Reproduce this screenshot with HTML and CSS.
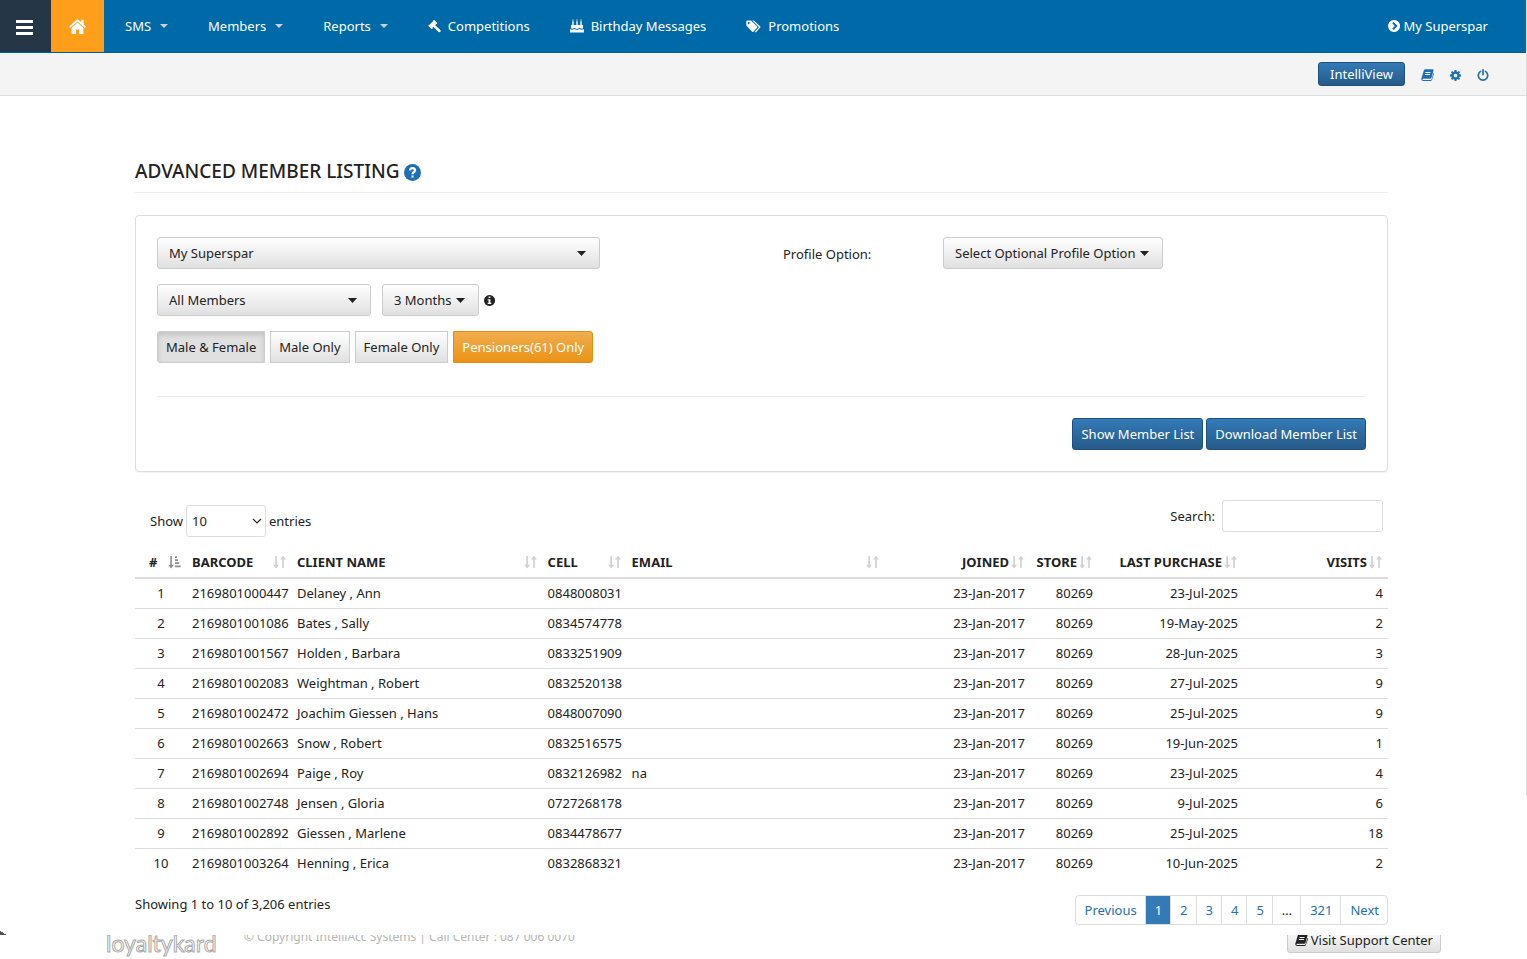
FILE: index.html
```html
<!DOCTYPE html>
<html lang="en">
  <head>
    <meta charset="utf-8">
    <title>Advanced Member Listing</title>
    <link rel="stylesheet" href="styles.css">
  </head>
  <body>
    <svg class="symbols" aria-hidden="true">
      <symbol id="home" viewBox="0 0 17 15">
        <path d="M8.500 0 0 7.600l1.200 1.300 7.300-6.500 7.300 6.500L17 7.600l-2.400-2.200V.8h-2.400v2.500z"/>
        <path d="M8.500 3.600 2.600 8.900V15h4.200v-4.600h3.400V15h4.200V8.900z"/>
      </symbol>
      <symbol id="gavel" viewBox="0 0 13 13">
        <path d="M5.200.2 6.300 0 9.300 3l-.2 1.200-.9-.1-3.700 3.700.1.900-1.200.2-3-3L.6 4.700l.9.100 3.700-3.700z"/>
        <path d="M6.500 6.200 11.400 11" fill="none" stroke="currentColor" stroke-width="2.500" stroke-linecap="round"/>
      </symbol>
      <symbol id="cake" viewBox="0 0 14 14">
        <path d="M2.300 2.200h1.400v4H2.300zM6.300 2.200h1.400v4H6.300zM10.300 2.200h1.400v4h-1.400zM3 0l.8 1.600H2.200zM7 0l.8 1.600H6.200zM11 0l.8 1.600h-1.600zM1 6h12v3.200l-1.500.6L9.500 9 7 9.900 4.500 9l-2 .8L1 9.200zM0 10.300l2.500.5 2-.8 2.500.9 2.500-.9 2 .8 2.500-.5v3.200H0z"/>
      </symbol>
      <symbol id="tags" viewBox="0 0 15 13">
        <path fill-rule="evenodd" d="M.3 1.500Q.3.500 1.300.5H5l6.200 6q.5.500 0 1L7.400 11.700q-.6.500-1.200 0L.3 5.600zM2.700 1.900a1 1 0 1 0 .1 0z"/>
        <path d="M6.400.5h1.400L14.300 6.500q.4.500 0 1L10 12.200q-.8.400-1.300-.2l4.200-4.900z"/>
      </symbol>
      <symbol id="chevron-circle" viewBox="0 0 12 12">
        <path fill-rule="evenodd" d="M6 0a6 6 0 1 0 .1 0zM4.200 3.300 5.600 2l4 4-4 4-1.400-1.300L6.900 6z"/>
      </symbol>
      <symbol id="book" viewBox="0 0 13 12">
        <path fill-rule="evenodd" d="M4.200.3h7.600q1 .2.700 1.200L10.400 9q-.3.700-1 .7H2.200q-1 0-.7.700.2.500.8.500h7.500q.6 0 .8-.6l1.800-6.300q.8.300.5 1.200l-2 5.800q-.4.900-1.300.9H2Q.2 11.800.2 10l2.500-8.300Q3 .4 4.200.3zM4.600 3l-.3.900h5.100l.3-.9zM4 5l-.3.900h5.100L9.100 5z"/>
      </symbol>
      <symbol id="gear" viewBox="0 0 12 12">
        <path fill-rule="evenodd" d="M5 0h2l.3 1.700 1 .4L9.700 1.100l1.300 1.300L10 3.700l.4 1L12 5v2l-1.600.3-.4 1 1 1.300L9.700 10.900 8.300 9.900l-1 .4L7 12H5l-.3-1.700-1-.4-1.400 1L1 9.600l1-1.300-.4-1L0 7V5l1.600-.3.4-1-1-1.300 1.300-1.300 1.400 1 1-.4zM6 4a2 2 0 1 0 .1 0z"/>
      </symbol>
      <symbol id="power" viewBox="0 0 12 12">
        <path d="M3.500 2.400a4.700 4.700 0 1 0 5 0M6 .8v4.700" fill="none" stroke="currentColor" stroke-width="1.700" stroke-linecap="round"/>
      </symbol>
      <symbol id="question" viewBox="0 0 16 16">
        <circle cx="8" cy="8" r="8"/>
        <path d="M5.600 6.100Q5.800 3.900 8 3.900t2.400 1.900Q10.400 7 9.100 7.700 8 8.300 8 9.600" fill="none" stroke="#fff" stroke-width="2.100"/>
        <path d="M7 10.800h2v2H7z" fill="#fff"/>
      </symbol>
      <symbol id="info" viewBox="0 0 12 12">
        <path fill-rule="evenodd" d="M6 0a6 6 0 1 0 .1 0zM5 1.700h2v1.700H5zM4 4.500h3v4h1v1.300H4V8.500h1V5.700H4z"/>
      </symbol>
      <symbol id="sort" viewBox="0 0 13 14">
        <path d="M2.300 1h1.600v8.700H6L3.100 13.500.2 9.700h2.100zM9.200 13h1.600V4.600h2.100L10 .8 7.100 4.600h2.100z"/>
      </symbol>
      <symbol id="sort-asc" viewBox="0 0 13 14">
        <path d="M2.300 1h1.600v8.700H6L3.100 13.500.2 9.700h2.100zM7 1.300h2v1.700H7zM7 4.300h3V6H7zM7 7.300h4.200V9H7zM7 10.500h5.700v1.700H7z"/>
      </symbol>
    </svg>

    <header>
      <nav class="navbar">
        <button class="menu-toggle" aria-label="Menu"><span></span><span></span><span></span></button>
        <a class="home" href="#" aria-label="Home"><svg width="17" height="15"><use href="#home"/></svg></a>
        <a class="nav-link dropdown" href="#">SMS</a>
        <a class="nav-link dropdown" href="#">Members</a>
        <a class="nav-link dropdown" href="#">Reports</a>
        <a class="nav-link" href="#"><svg width="13" height="13"><use href="#gavel"/></svg>Competitions</a>
        <a class="nav-link" href="#"><svg width="14" height="14"><use href="#cake"/></svg>Birthday Messages</a>
        <a class="nav-link" href="#"><svg width="15" height="13"><use href="#tags"/></svg>Promotions</a>
        <a class="store-link" href="#"><svg width="12" height="12"><use href="#chevron-circle"/></svg>My Superspar</a>
      </nav>
      <div class="subbar">
        <button class="btn btn-primary btn-sm">IntelliView</button>
        <a href="#" aria-label="Manual"><svg width="13" height="12"><use href="#book"/></svg></a>
        <a href="#" aria-label="Settings"><svg width="11" height="11"><use href="#gear"/></svg></a>
        <a href="#" aria-label="Log out"><svg width="12" height="12"><use href="#power"/></svg></a>
      </div>
    </header>

    <main>
      <h1>ADVANCED MEMBER LISTING <a href="#" aria-label="Help"><svg width="17" height="17"><use href="#question"/></svg></a></h1>

      <form class="panel">
        <div class="filters">
          <div class="filter-rows">
            <select class="btn btn-default select-store" aria-label="Store">
              <option>My Superspar</option>
            </select>
            <div class="filter-row">
              <select class="btn btn-default select-members" aria-label="Members">
                <option>All Members</option>
              </select>
              <select class="btn btn-default select-period" aria-label="Period">
                <option>3 Months</option>
              </select>
              <svg class="info" width="11" height="11"><use href="#info"/></svg>
            </div>
            <div class="btn-group">
              <button type="button" class="btn btn-default active">Male &amp; Female</button>
              <button type="button" class="btn btn-default">Male Only</button>
              <button type="button" class="btn btn-default">Female Only</button>
              <button type="button" class="btn btn-warning">Pensioners(61) Only</button>
            </div>
          </div>
          <label for="profile">Profile Option:</label>
          <select class="btn btn-default select-profile" id="profile">
            <option>Select Optional Profile Option</option>
          </select>
        </div>
        <div class="panel-actions">
          <button type="button" class="btn btn-primary">Show Member List</button>
          <button type="button" class="btn btn-primary">Download Member List</button>
        </div>
      </form>

      <div class="table-tools">
        <label class="length">Show
          <select>
            <option>10</option>
          </select>
          entries</label>
        <label class="search">Search: <input type="search"></label>
      </div>

      <table>
        <colgroup>
          <col class="col-num">
          <col class="col-barcode">
          <col class="col-name">
          <col class="col-cell">
          <col>
          <col class="col-date">
          <col class="col-store">
          <col class="col-date">
          <col class="col-date">
        </colgroup>
        <thead>
          <tr>
            <th><button class="sorted"># <svg width="13" height="14"><use href="#sort-asc"/></svg></button></th>
            <th><button>BARCODE <svg width="13" height="14"><use href="#sort"/></svg></button></th>
            <th><button>CLIENT NAME <svg width="13" height="14"><use href="#sort"/></svg></button></th>
            <th><button>CELL <svg width="13" height="14"><use href="#sort"/></svg></button></th>
            <th><button>EMAIL <svg width="13" height="14"><use href="#sort"/></svg></button></th>
            <th class="right"><button>JOINED <svg width="13" height="14"><use href="#sort"/></svg></button></th>
            <th class="right"><button>STORE <svg width="13" height="14"><use href="#sort"/></svg></button></th>
            <th class="right"><button>LAST PURCHASE <svg width="13" height="14"><use href="#sort"/></svg></button></th>
            <th class="right"><button>VISITS <svg width="13" height="14"><use href="#sort"/></svg></button></th>
          </tr>
        </thead>
        <tbody>
          <tr><td class="num">1</td><td>2169801000447</td><td>Delaney , Ann</td><td>0848008031</td><td></td><td class="right">23-Jan-2017</td><td class="right">80269</td><td class="right">23-Jul-2025</td><td class="right">4</td></tr>
          <tr><td class="num">2</td><td>2169801001086</td><td>Bates , Sally</td><td>0834574778</td><td></td><td class="right">23-Jan-2017</td><td class="right">80269</td><td class="right">19-May-2025</td><td class="right">2</td></tr>
          <tr><td class="num">3</td><td>2169801001567</td><td>Holden , Barbara</td><td>0833251909</td><td></td><td class="right">23-Jan-2017</td><td class="right">80269</td><td class="right">28-Jun-2025</td><td class="right">3</td></tr>
          <tr><td class="num">4</td><td>2169801002083</td><td>Weightman , Robert</td><td>0832520138</td><td></td><td class="right">23-Jan-2017</td><td class="right">80269</td><td class="right">27-Jul-2025</td><td class="right">9</td></tr>
          <tr><td class="num">5</td><td>2169801002472</td><td>Joachim Giessen , Hans</td><td>0848007090</td><td></td><td class="right">23-Jan-2017</td><td class="right">80269</td><td class="right">25-Jul-2025</td><td class="right">9</td></tr>
          <tr><td class="num">6</td><td>2169801002663</td><td>Snow , Robert</td><td>0832516575</td><td></td><td class="right">23-Jan-2017</td><td class="right">80269</td><td class="right">19-Jun-2025</td><td class="right">1</td></tr>
          <tr><td class="num">7</td><td>2169801002694</td><td>Paige , Roy</td><td>0832126982</td><td>na</td><td class="right">23-Jan-2017</td><td class="right">80269</td><td class="right">23-Jul-2025</td><td class="right">4</td></tr>
          <tr><td class="num">8</td><td>2169801002748</td><td>Jensen , Gloria</td><td>0727268178</td><td></td><td class="right">23-Jan-2017</td><td class="right">80269</td><td class="right">9-Jul-2025</td><td class="right">6</td></tr>
          <tr><td class="num">9</td><td>2169801002892</td><td>Giessen , Marlene</td><td>0834478677</td><td></td><td class="right">23-Jan-2017</td><td class="right">80269</td><td class="right">25-Jul-2025</td><td class="right">18</td></tr>
          <tr><td class="num">10</td><td>2169801003264</td><td>Henning , Erica</td><td>0832868321</td><td></td><td class="right">23-Jan-2017</td><td class="right">80269</td><td class="right">10-Jun-2025</td><td class="right">2</td></tr>
        </tbody>
      </table>

      <div class="table-footer">
        <p>Showing 1 to 10 of 3,206 entries</p>
        <nav class="pagination">
          <a href="#">Previous</a>
          <a class="current" href="#">1</a>
          <a href="#">2</a>
          <a href="#">3</a>
          <a href="#">4</a>
          <a href="#">5</a>
          <span>…</span>
          <a href="#">321</a>
          <a href="#">Next</a>
        </nav>
      </div>
    </main>

    <footer>
      <span class="logo">loyaltykard</span>
      <span class="copyright">© Copyright IntelliAcc Systems | Call Center : 087 006 0070</span>
      <button class="btn btn-default support"><svg width="13" height="12"><use href="#book"/></svg>Visit Support Center</button>
    </footer>
  </body>
</html>
```
FILE: styles.css
```css
* {
  box-sizing: border-box;
}

body {
  margin: 0;
  background: linear-gradient(#ddd, #ddd) no-repeat right top / 1px 795px #fff;
  color: #222;
  font-family: "Noto Sans", "Open Sans", sans-serif;
  font-size: 13px;
  line-height: 18px;
}

button,
input,
select {
  font: inherit;
  color: inherit;
}

a {
  color: #1f6fb5;
  text-decoration: none;
}

svg {
  fill: currentColor;
  flex: none;
}

.symbols {
  display: none;
}

/* top bars */
header {
  margin-right: 1px;
}

.navbar {
  display: flex;
  align-items: stretch;
  height: 53px;
  padding-right: 38px;
  background: #0069a8;
  border-bottom: 1px solid #005f9b;
}

.navbar a {
  display: flex;
  align-items: center;
  color: #fff;
  white-space: nowrap;
}

.menu-toggle {
  display: flex;
  flex-direction: column;
  align-items: center;
  justify-content: center;
  gap: 3px;
  width: 51px;
  padding: 2px 3px 0 0;
  border: 0;
  background: #253746;
}

.menu-toggle span {
  width: 17px;
  height: 3px;
  background: #fff;
}

.home {
  justify-content: center;
  width: 53px;
  background: #ff9e1b;
}

.navbar .nav-link {
  gap: 7px;
  padding: 0 19px 0 21px;
}

.navbar .dropdown {
  gap: 9px;
}

.dropdown::after {
  content: "";
  border: 4px solid transparent;
  border-top-color: #c9d3da;
  border-bottom: 0;
}

.navbar .store-link {
  gap: 3px;
  margin-left: auto;
}

.subbar {
  display: flex;
  align-items: center;
  justify-content: flex-end;
  gap: 16px;
  height: 43px;
  padding-right: 37px;
  background: #f4f4f4;
  border-bottom: 1px solid #ddd;
}

.subbar a {
  display: flex;
  padding-top: 2px;
}

/* buttons */
.btn {
  height: 32px;
  padding: 0 11px;
  border: 1px solid #ccc;
  border-radius: 3px;
  font-size: 13px;
  white-space: nowrap;
  cursor: pointer;
}

.btn-default {
  background: linear-gradient(#fff, #e0e0e0);
}

.btn-default.active {
  background: #e0e0e0;
  box-shadow: inset 0 3px 5px rgba(0, 0, 0, 0.13);
}

.btn-primary {
  border-color: #1d4f80;
  background: linear-gradient(#337ab7, #265a88);
  color: #fff;
}

.btn-warning {
  border-color: #e38d13;
  background: linear-gradient(#f0ad4e, #eb9316);
  color: #fff;
}

.btn-sm {
  height: 24px;
}

select.btn {
  appearance: none;
  background: url("data:image/svg+xml,%3Csvg xmlns='http://www.w3.org/2000/svg' width='9' height='5'%3E%3Cpath d='M0 0h9L4.500 5z' fill='%23222'/%3E%3C/svg%3E") no-repeat right 13px center, linear-gradient(#fff, #e0e0e0);
}

/* content */
main {
  padding: 63px 139px 10px 135px;
  background: linear-gradient(to top right, #555 50%, transparent 50%) no-repeat left bottom / 7px 4px;
}

h1 {
  display: flex;
  align-items: center;
  gap: 5px;
  margin: 0 0 22px;
  padding-bottom: 9px;
  border-bottom: 1px solid #eee;
  font-size: 19px;
  font-weight: 500;
  line-height: 24px;
}

h1 a {
  display: flex;
  padding-top: 2px;
}

.panel {
  padding: 21px;
  border: 1px solid #ddd;
  border-radius: 4px;
  box-shadow: 0 1px 1px rgba(0, 0, 0, 0.05);
}

.filters {
  display: grid;
  grid-template-columns: 626fr 160fr 423fr;
  align-items: start;
  padding-bottom: 33px;
  border-bottom: 1px solid #eee;
}

.filters label {
  padding-top: 8px;
}

.filter-rows {
  display: flex;
  flex-direction: column;
  gap: 15px;
}

.filter-row {
  display: flex;
  align-items: center;
}

.select-store {
  width: 443px;
  max-width: 100%;
}

.select-members {
  width: 214px;
  margin-right: 11px;
}

.select-period {
  width: 97px;
}

.select-profile {
  width: 220px;
}

.info {
  margin-left: 5px;
}

.btn-group {
  display: flex;
  gap: 5px;
}

.btn-group .btn,
.panel-actions .btn {
  padding: 0 8px;
}

.btn-group .btn {
  border-radius: 0;
}

.btn-group .btn:first-child {
  border-radius: 3px 0 0 3px;
}

.btn-group .btn:last-child {
  border-radius: 0 3px 3px 0;
}

.panel-actions {
  display: flex;
  justify-content: flex-end;
  gap: 3px;
  padding-top: 21px;
}

.table-tools {
  display: flex;
  justify-content: space-between;
  align-items: flex-start;
  padding: 28px 5px 10px 15px;
}

.length,
.search {
  display: flex;
  align-items: center;
  gap: 3px;
}

.length {
  padding-top: 5px;
}

.search {
  gap: 7px;
}

.length select,
.search input {
  height: 32px;
  border: 1px solid #ddd;
  border-radius: 3px;
  background: #fff;
}

.length select {
  appearance: none;
  width: 80px;
  padding: 0 5px;
  background: url("data:image/svg+xml,%3Csvg xmlns='http://www.w3.org/2000/svg' width='10' height='6'%3E%3Cpath d='M1 1l4 4 4-4' fill='none' stroke='%23222' stroke-width='1.200'/%3E%3C/svg%3E") no-repeat right 3px center;
}

.search input {
  width: 161px;
}

/* member table */
table {
  width: 100%;
  table-layout: fixed;
  border-collapse: collapse;
}

.col-num {
  width: 52px;
}

.col-barcode {
  width: 105px;
}

.col-name {
  width: 20%;
}

.col-cell {
  width: 84px;
}

.col-date {
  width: 145px;
}

.col-store {
  width: 68px;
}

th,
td {
  height: 30px;
  padding: 0 5px;
  text-align: left;
  white-space: nowrap;
}

th {
  height: 31px;
  border-bottom: 2px solid #ddd;
}

th button {
  display: flex;
  align-items: center;
  justify-content: space-between;
  width: 100%;
  padding: 0 1px 0 0;
  border: 0;
  background: none;
  font-weight: 700;
  cursor: pointer;
}

th svg {
  color: #d0d0d0;
}

th .sorted {
  padding-left: 9px;
}

.sorted svg {
  color: #8c8c8c;
}

th.right button {
  justify-content: flex-end;
  gap: 2px;
}

td {
  border-bottom: 1px solid #ddd;
}

tbody tr:last-child td {
  border-bottom: 0;
}

td.num {
  text-align: center;
}

.right {
  text-align: right;
}

.table-footer {
  display: flex;
  justify-content: space-between;
  align-items: flex-start;
  padding-top: 17px;
}

.table-footer p {
  margin: 0;
}

.pagination {
  display: flex;
  border: 1px solid #ddd;
  border-radius: 4px;
}

.pagination a,
.pagination span {
  padding: 5px 8px 5px 9px;
  border-left: 1px solid #ddd;
}

.pagination a:first-child {
  border-left: 0;
}

.pagination .current {
  background: #337ab7;
  color: #fff;
}

footer {
  display: flex;
  align-items: flex-start;
  height: 24px;
  padding: 0 86px 0 106px;
  overflow: hidden;
}

footer > * {
  margin-top: -8px;
}

.logo {
  width: 138px;
  color: #fff;
  font-family: Lato, sans-serif;
  font-size: 23px;
  line-height: 32px;
  -webkit-text-stroke: 1px #aaa;
}

.copyright {
  color: #b5b5b5;
  font-size: 12px;
  line-height: 20px;
}

.support {
  display: flex;
  align-items: center;
  gap: 3px;
  height: 26px;
  margin-left: auto;
  padding: 0 7px;
  font-size: 13px;
}
```
